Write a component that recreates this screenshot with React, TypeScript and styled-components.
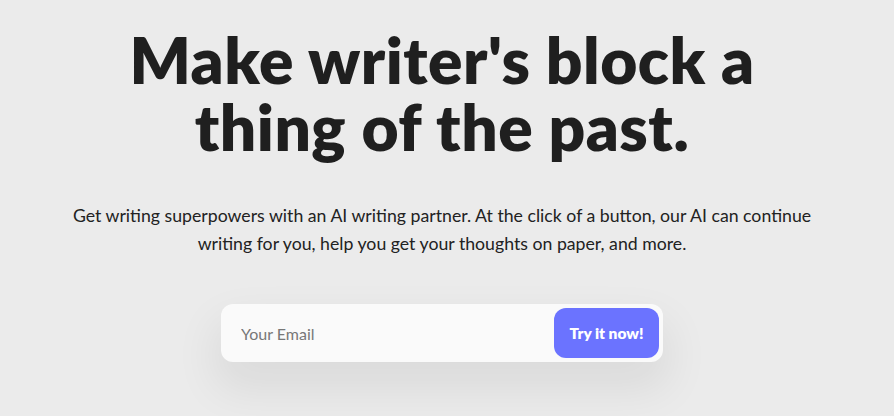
import React from "react";
import styled, { createGlobalStyle } from "styled-components";

const Global = createGlobalStyle`
  html, body { margin: 0; padding: 0; background: #ebebeb; }
  body { font-family: Lato, "Noto Sans", sans-serif; color: #1f1f1f; }
`;

const Page = styled.main`
  width: 884px;
  height: 416px;
  overflow: hidden;
  display: flex;
  flex-direction: column;
  align-items: center;
  padding-top: 26px;
  box-sizing: border-box;
`;

const Title = styled.h1`
  margin: 0;
  font-family: Lato, sans-serif;
  font-weight: 800;
  font-size: 64px;
  line-height: 67px;
  letter-spacing: 0.5px;
  text-align: center;
  color: #1f1f1f;
`;

const Lead = styled.p`
  margin: 42px 0 0;
  font-size: 17.7px;
  line-height: 28px;
  text-align: center;
  color: #222;
  max-width: 780px;
`;

const Form = styled.form`
  margin-top: 46px;
  width: 442px;
  height: 58px;
  box-sizing: border-box;
  padding: 4px;
  display: flex;
  align-items: stretch;
  background: #fafafa;
  border-radius: 12px;
  box-shadow: 0 22px 44px 6px rgba(0, 0, 0, 0.07);
`;

const Email = styled.input`
  flex: 1;
  border: none;
  outline: none;
  background: transparent;
  font-family: Lato, sans-serif;
  font-size: 16px;
  color: #333;
  padding: 0 16px;
  &::placeholder { color: #777; }
`;

const Button = styled.button`
  width: 105px;
  border: none;
  border-radius: 12px;
  background: #6b73ff;
  color: #fff;
  font-family: Lato, sans-serif;
  font-weight: 800;
  font-size: 15.5px;
  cursor: pointer;
`;

export default function App() {
  return (
    <>
      <Global />
      <Page>
        <Title>
          Make writer's block a<br />thing of the past.
        </Title>
        <Lead>
          Get writing superpowers with an AI writing partner. At the click of a button, our AI can continue writing for you, help you get your thoughts on paper, and more.
        </Lead>
        <Form onSubmit={(e) => e.preventDefault()}>
          <Email placeholder="Your Email" />
          <Button type="submit">Try it now!</Button>
        </Form>
      </Page>
    </>
  );
}
